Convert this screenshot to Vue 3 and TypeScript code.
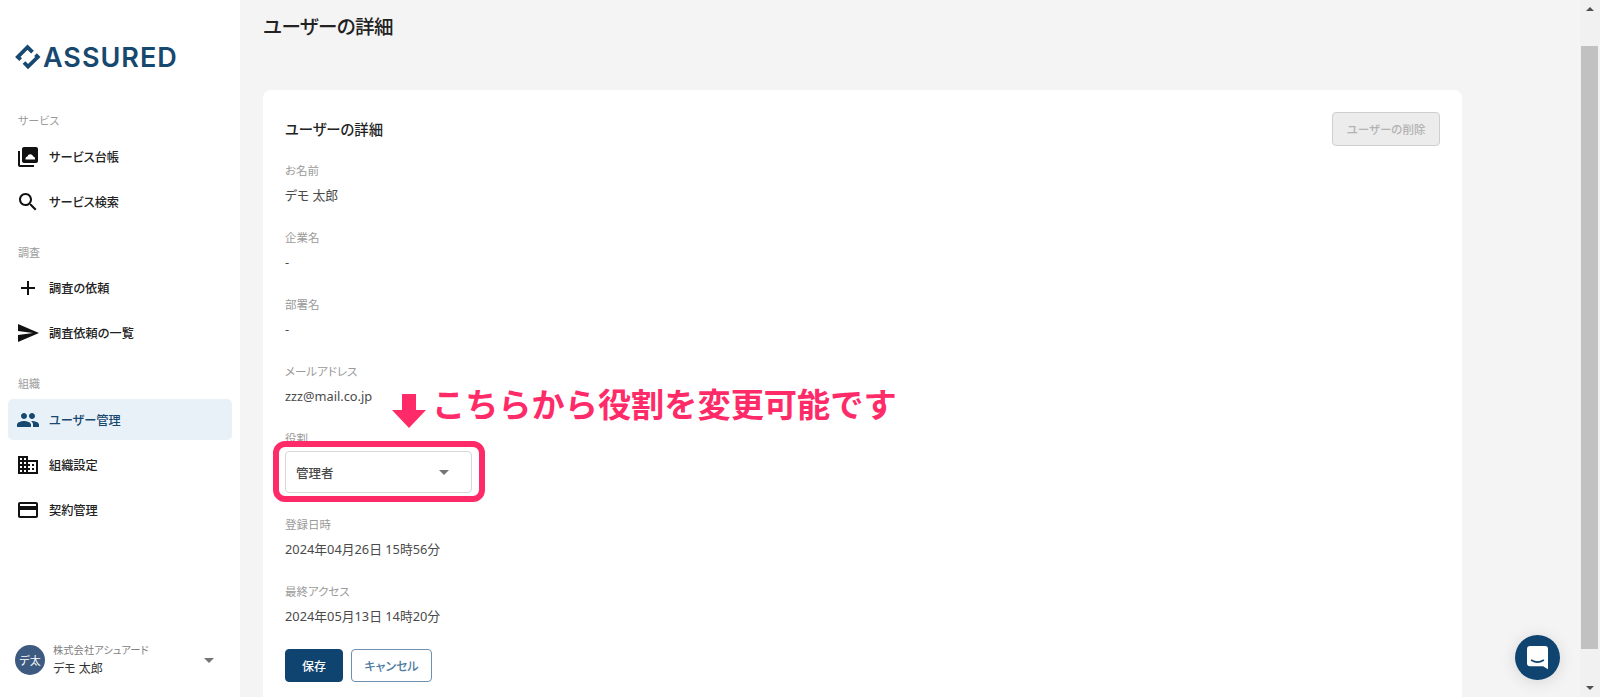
<template>
  <div class="app">
    <aside class="sidebar">
      <div class="logo">
        <svg class="logo-mark" viewBox="0 0 26 26" width="26" height="26">
          <path d="M5.700 15.700 L2.800 13 L12.500 3.200 L17.500 8.200" fill="none" stroke="#17486f" stroke-width="3.800" />
          <path d="M9 18.500 L13 22.500 L22.800 13 L20.500 10.700" fill="none" stroke="#17486f" stroke-width="3.800" />
        </svg>
        <span class="logo-text">ASSURED</span>
      </div>

      <nav class="nav">
        <div v-for="group in groups" :key="group.title" class="group">
          <div class="group-title">{{ group.title }}</div>
          <a v-for="item in group.items" :key="item.label" class="item" :class="{ active: item.active }">
            <svg viewBox="0 0 24 24" width="24" height="24" class="item-icon">
              <path :d="item.icon" />
              <path v-if="item.inner" :d="item.inner" fill="#fff" />
            </svg>
            <span>{{ item.label }}</span>
          </a>
        </div>
      </nav>

      <div class="account">
        <div class="avatar">デ太</div>
        <div class="account-text">
          <div class="company">株式会社アシュアード</div>
          <div class="person">デモ 太郎</div>
        </div>
        <span class="caret"></span>
      </div>
    </aside>

    <main class="main">
      <h1 class="page-title">ユーザーの詳細</h1>
      <section class="card">
        <div class="card-head">
          <h2 class="card-title">ユーザーの詳細</h2>
          <button class="btn-delete" disabled>ユーザーの削除</button>
        </div>

        <div v-for="f in topFields" :key="f.label" class="field">
          <div class="label">{{ f.label }}</div>
          <div class="value">{{ f.value }}</div>
        </div>

        <div class="field role">
          <div class="label">役割</div>
          <div class="select">
            <span>管理者</span>
            <span class="caret"></span>
          </div>
          <div class="highlight"></div>
          <div class="note">
            <svg viewBox="0 0 36 36" width="36" height="36" class="note-arrow">
              <path d="M11 1 H25 V17 H35 L18 35 L1 17 H11 Z" fill="#fe2b68" />
            </svg>
            <span class="note-text">こちらから役割を変更可能です</span>
          </div>
        </div>

        <div v-for="f in bottomFields" :key="f.label" class="field">
          <div class="label">{{ f.label }}</div>
          <div class="value">{{ f.value }}</div>
        </div>

        <div class="actions">
          <button class="btn-save">保存</button>
          <button class="btn-cancel">キャンセル</button>
        </div>
      </section>

      <button class="chat" aria-label="chat">
        <svg viewBox="0 0 28 32" width="21" height="24">
          <path
            d="M4 0 H24 A4 4 0 0 1 28 4 V31 L21.500 27 H4 A4 4 0 0 1 0 23 V4 A4 4 0 0 1 4 0 Z"
            fill="#fff"
          />
          <path d="M6 19 Q14 24 22 19" fill="none" stroke="#0f4470" stroke-width="2" stroke-linecap="round" />
        </svg>
      </button>
    </main>

    <div class="scrollbar">
      <span class="arrow up"></span>
      <div class="track"><div class="thumb"></div></div>
      <span class="arrow down"></span>
    </div>
  </div>
</template>

<script setup lang="ts">
interface NavItem {
  label: string
  icon: string
  inner?: string
  active?: boolean
}

interface NavGroup {
  title: string
  items: NavItem[]
}

const groups: NavGroup[] = [
  {
    title: 'サービス',
    items: [
      {
        label: 'サービス台帳',
        icon: 'M4 6H2v14c0 1.100.9 2 2 2h14v-2H4V6zm16-4H8c-1.100 0-2 .9-2 2v12c0 1.100.9 2 2 2h12c1.100 0 2-.9 2-2V4c0-1.100-.9-2-2-2z',
        inner: 'M9.500 13.500c0-1.200.9-2 2-2.100.5-1.300 1.500-2.200 2.800-2.200 1.500 0 2.600 1 2.900 2.300 1 .1 1.800.9 1.800 2V14.500H9.500z',
      },
      {
        label: 'サービス検索',
        icon: 'M15.500 14h-.79l-.28-.27C15.410 12.590 16 11.110 16 9.500 16 5.910 13.090 3 9.500 3S3 5.910 3 9.500 5.910 16 9.500 16c1.610 0 3.090-.59 4.230-1.570l.27.28v.79l5 4.990L20.490 19l-4.990-5zm-6 0C7.010 14 5 11.990 5 9.500S7.010 5 9.500 5 14 7.010 14 9.500 11.990 14 9.500 14z',
      },
    ],
  },
  {
    title: '調査',
    items: [
      { label: '調査の依頼', icon: 'M19 13h-6v6h-2v-6H5v-2h6V5h2v6h6v2z' },
      { label: '調査依頼の一覧', icon: 'M2.010 21L23 12 2.010 3 2 10l15 2-15 2z' },
    ],
  },
  {
    title: '組織',
    items: [
      {
        label: 'ユーザー管理',
        active: true,
        icon: 'M16 11c1.660 0 2.990-1.340 2.990-3S17.660 5 16 5c-1.660 0-3 1.340-3 3s1.340 3 3 3zm-8 0c1.660 0 2.990-1.340 2.990-3S9.660 5 8 5C6.340 5 5 6.340 5 8s1.340 3 3 3zm0 2c-2.330 0-7 1.170-7 3.500V19h14v-2.500c0-2.330-4.670-3.500-7-3.500zm8 0c-.29 0-.62.02-.97.05 1.160.84 1.970 1.970 1.970 3.450V19h6v-2.500c0-2.330-4.670-3.500-7-3.500z',
      },
      {
        label: '組織設定',
        icon: 'M12 7V3H2v18h20V7H12zM6 19H4v-2h2v2zm0-4H4v-2h2v2zm0-4H4V9h2v2zm0-4H4V5h2v2zm4 12H8v-2h2v2zm0-4H8v-2h2v2zm0-4H8V9h2v2zm0-4H8V5h2v2zm10 12h-8v-2h2v-2h-2v-2h2v-2h-2V9h8v10zm-2-8h-2v2h2v-2zm0 4h-2v2h2v-2z',
      },
      {
        label: '契約管理',
        icon: 'M20 4H4c-1.110 0-1.990.89-1.990 2L2 18c0 1.110.89 2 2 2h16c1.110 0 2-.89 2-2V6c0-1.110-.89-2-2-2zm0 14H4v-6h16v6zm0-10H4V6h16v2z',
      },
    ],
  },
]

const topFields = [
  { label: 'お名前', value: 'デモ 太郎' },
  { label: '企業名', value: '-' },
  { label: '部署名', value: '-' },
  { label: 'メールアドレス', value: 'zzz@mail.co.jp' },
]

const bottomFields = [
  { label: '登録日時', value: '2024年04月26日 15時56分' },
  { label: '最終アクセス', value: '2024年05月13日 14時20分' },
]
</script>

<style>
html,
body {
  margin: 0;
  overflow: hidden;
}
</style>

<style scoped>
.app {
  display: flex;
  height: 697px;
  overflow: hidden;
  font-family: "Noto Sans", "Noto Sans CJK JP", sans-serif;
  font-feature-settings: "palt";
  color: #333;
  background: #f4f4f4;
}

.sidebar {
  width: 240px;
  flex: none;
  background: #fff;
  display: flex;
  flex-direction: column;
}
.logo {
  display: flex;
  align-items: center;
  gap: 2px;
  height: 26px;
  padding: 44px 0 0 15px;
}
.logo-mark {
  flex: none;
}
.logo-text {
  font-family: Inter, sans-serif;
  font-size: 27px;
  font-weight: 600;
  letter-spacing: 1px;
  color: #17486f;
}
.nav {
  margin-top: 43px;
}
.group {
  margin-bottom: 22.500px;
}
.group-title {
  font-size: 11px;
  line-height: 16px;
  color: #9b9b9b;
  padding-left: 18px;
  margin-bottom: 7px;
}
.item {
  display: flex;
  align-items: center;
  gap: 9px;
  height: 41px;
  margin: 0 8px 4px;
  padding-left: 8px;
  border-radius: 5px;
  font-size: 12.200px;
  font-weight: 500;
  color: #222;
}
.item-icon {
  flex: none;
  fill: #111;
}
.item.active {
  background: #e9f1f8;
  color: #17486f;
}
.item.active .item-icon {
  fill: #17486f;
}

.account {
  margin-top: auto;
  display: flex;
  align-items: center;
  padding: 0 26px 19px 15px;
}
.avatar {
  width: 30px;
  height: 30px;
  border-radius: 50%;
  background: #3d5a80;
  color: #fff;
  font-size: 11px;
  display: flex;
  align-items: center;
  justify-content: center;
  flex: none;
}
.account-text {
  margin-left: 8px;
  flex: 1;
}
.company {
  font-size: 10.300px;
  line-height: 17px;
  color: #808080;
}
.person {
  font-size: 12px;
  line-height: 19px;
  color: #333;
}
.caret {
  width: 0;
  height: 0;
  border-left: 5px solid transparent;
  border-right: 5px solid transparent;
  border-top: 5px solid #757575;
  flex: none;
}

.main {
  flex: 1;
  min-width: 0;
  position: relative;
  padding: 0 118px 0 23px;
}
.page-title {
  margin: 12px 0 0;
  font-size: 19.500px;
  line-height: 30px;
  font-weight: 500;
  letter-spacing: -0.500px;
  color: #222;
}
.card {
  margin-top: 48px;
  background: #fff;
  border-radius: 8px;
  padding: 22px 22px 40px;
}
.card-head {
  display: flex;
  justify-content: space-between;
  align-items: flex-start;
  height: 50px;
}
.card-title {
  margin: 8px 0 0;
  font-size: 14.300px;
  line-height: 20px;
  font-weight: 500;
  color: #222;
}
.btn-delete {
  width: 108px;
  height: 34px;
  border: 1px solid #cfcfcf;
  border-radius: 4px;
  background: #ececec;
  color: #b3b3b3;
  font: inherit;
  font-size: 11.500px;
  font-weight: 500;
  padding: 0;
}
.field {
  height: 67px;
}
.label {
  font-size: 11.500px;
  line-height: 18px;
  color: #9a9a9a;
}
.value {
  margin-top: 6px;
  font-size: 12.800px;
  line-height: 18px;
  color: #4a4a4a;
}

.role {
  position: relative;
  height: 86px;
}
.select {
  margin-top: 3px;
  width: 187px;
  height: 42px;
  box-sizing: border-box;
  border: 1px solid #d8d8d8;
  border-radius: 4px;
  display: flex;
  align-items: center;
  justify-content: space-between;
  padding: 0 22px 0 10px;
  font-size: 12.500px;
  font-weight: 500;
  color: #4a4a4a;
}
.highlight {
  position: absolute;
  left: -12px;
  top: 11px;
  width: 212px;
  height: 61px;
  box-sizing: border-box;
  border: 6px solid #fe2b68;
  border-radius: 12px;
}
.note {
  position: absolute;
  left: 106px;
  top: -45px;
  display: flex;
  align-items: flex-start;
  gap: 5px;
  white-space: nowrap;
  font-feature-settings: normal;
}
.note-arrow {
  margin-top: 8px;
}
.note-text {
  font-size: 33.200px;
  line-height: 40px;
  font-weight: 700;
  color: #fe2b68;
}

.actions {
  display: flex;
  gap: 8px;
  margin-top: -1px;
}
.btn-save,
.btn-cancel {
  height: 33px;
  border-radius: 4px;
  font: inherit;
  font-size: 12px;
  font-weight: 500;
  padding: 0;
  box-sizing: border-box;
}
.btn-save {
  width: 58px;
  background: #0f4470;
  border: 1px solid #0f4470;
  color: #fff;
}
.btn-cancel {
  width: 81px;
  background: #fff;
  border: 1px solid #6c90ae;
  color: #4f7b9f;
}

.chat {
  position: absolute;
  right: 20px;
  top: 635px;
  width: 45px;
  height: 45px;
  padding: 0;
  border: none;
  border-radius: 50%;
  background: #0f4470;
  box-shadow: 0 2px 16px rgba(0, 0, 0, 0.12);
  display: flex;
  align-items: center;
  justify-content: center;
}

.scrollbar {
  width: 20px;
  flex: none;
  background: #f1f1f1;
  display: flex;
  flex-direction: column;
  align-items: center;
}
.track {
  flex: 1;
  width: 100%;
  padding: 35px 2px 37px 1px;
  box-sizing: border-box;
  display: flex;
}
.thumb {
  flex: 1;
  background: #c1c1c1;
}
.arrow {
  width: 0;
  height: 0;
  flex: none;
  border-left: 4px solid transparent;
  border-right: 4px solid transparent;
}
.arrow.up {
  margin-top: 7px;
  border-bottom: 4px solid #505050;
}
.arrow.down {
  margin-bottom: 7px;
  border-top: 4px solid #505050;
}
</style>
